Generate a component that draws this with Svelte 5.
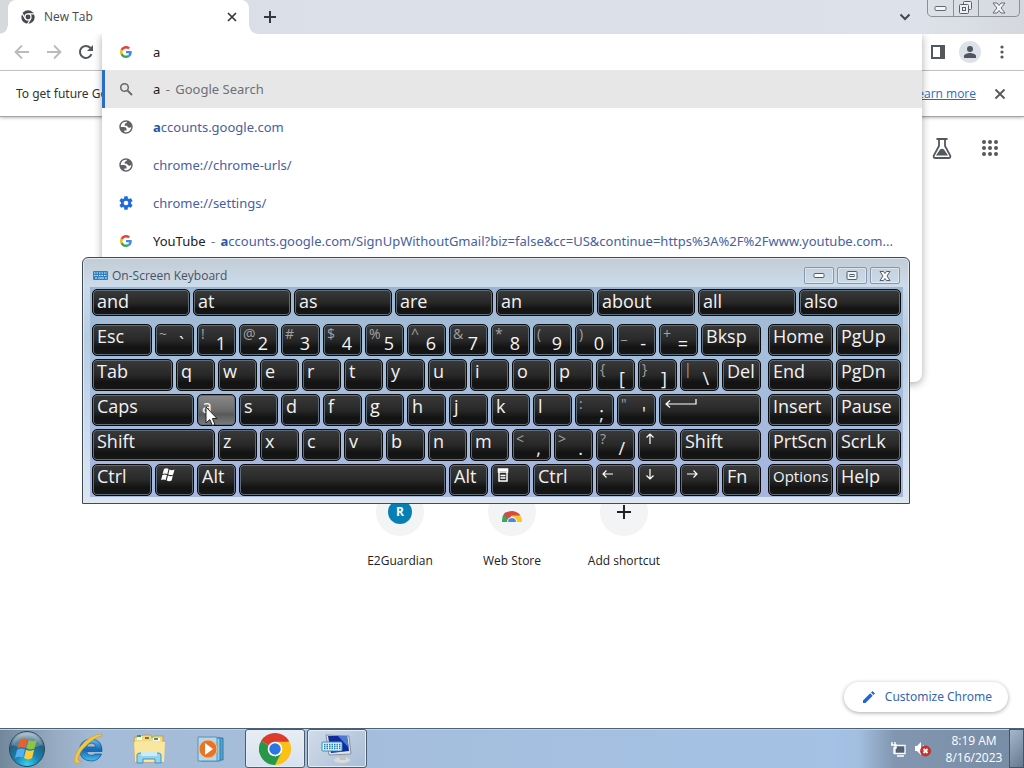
<script>
  const words = ['and', 'at', 'as', 'are', 'an', 'about', 'all', 'also'];
  const letters = (s) => s.split('').map((c) => ({ t: c, w: 39 }));
  const pair = (s, t) => ({ t, s, w: 39 });
  const columns = (row) => row.map((key) => `minmax(0, ${key.w}fr)`).join(' ');

  const rows = [
    [
      { t: 'Esc', w: 60 }, pair('~', '`'), pair('!', '1'), pair('@', '2'), pair('#', '3'), pair('$', '4'),
      pair('%', '5'), pair('^', '6'), pair('&', '7'), pair('*', '8'), pair('(', '9'), pair(')', '0'),
      pair('_', '-'), pair('+', '='), { t: 'Bksp', w: 60 }
    ],
    [{ t: 'Tab', w: 81 }, ...letters('qwertyuiop'), pair('{', '['), pair('}', ']'), pair('|', '\\'), { t: 'Del', w: 39 }],
    [{ t: 'Caps', w: 102 }, ...letters('asdfghjkl'), pair(':', ';'), pair('"', "'"), { icon: 'enter', name: 'Enter', w: 102 }],
    [
      { t: 'Shift', w: 123 }, ...letters('zxcvbnm'), pair('<', ','), pair('>', '.'), pair('?', '/'),
      { icon: 'up', name: 'Up', w: 39 }, { t: 'Shift', w: 81 }
    ],
    [
      { t: 'Ctrl', w: 60 }, { icon: 'win', name: 'Windows', w: 39 }, { t: 'Alt', w: 39 }, { t: '', name: 'Space', w: 207 },
      { t: 'Alt', w: 39 }, { icon: 'menu', name: 'Menu', w: 39 }, { t: 'Ctrl', w: 60 }, { icon: 'left', name: 'Left', w: 39 },
      { icon: 'down', name: 'Down', w: 39 }, { icon: 'right', name: 'Right', w: 39 }, { t: 'Fn', w: 39 }
    ]
  ];
  const side = [['Home', 'PgUp'], ['End', 'PgDn'], ['Insert', 'Pause'], ['PrtScn', 'ScrLk'], ['Options', 'Help']];
  let query = $state('a');
</script>

{#snippet google()}
  <svg width="12" height="12" viewBox="0 0 48 48" aria-hidden="true">
    <path fill="#ea4335" d="M24 9.5c3.54 0 6.71 1.22 9.21 3.6l6.85-6.85C35.9 2.38 30.47 0 24 0 14.62 0 6.51 5.38 2.56 13.22l7.98 6.19C12.43 13.72 17.74 9.5 24 9.5z" />
    <path fill="#4285f4" d="M46.98 24.55c0-1.57-.15-3.09-.38-4.55H24v9.02h12.94c-.58 2.96-2.26 5.48-4.78 7.18l7.73 6c4.51-4.18 7.09-10.36 7.09-17.65z" />
    <path fill="#fbbc05" d="M10.53 28.59c-.48-1.45-.76-2.99-.76-4.59s.27-3.14.76-4.59l-7.98-6.19C.92 16.46 0 20.12 0 24s.92 7.54 2.56 10.78l7.97-6.19z" />
    <path fill="#34a853" d="M24 48c6.48 0 11.93-2.13 15.89-5.81l-7.73-6c-2.15 1.45-4.92 2.3-8.16 2.3-6.26 0-11.57-4.22-13.47-9.91l-7.98 6.19C6.51 42.62 14.62 48 24 48z" />
  </svg>
{/snippet}

{#snippet globe()}
  <svg width="16" height="16" viewBox="0 0 24 24" aria-hidden="true">
    <path fill="#5f6368" fill-rule="evenodd" d="M12 2C6.48 2 2 6.48 2 12s4.48 10 10 10 10-4.48 10-10S17.52 2 12 2zM4 12h4.4c3.407.022 4.922 1.73 4.543 5.127H9.488v2.47a8.004 8.004 0 0 0 10.498-8.083C19.327 12.504 18.332 13 17 13c-2.137 0-3.206-.916-3.206-2.75h-3.748c-.274-2.728.683-4.092 2.87-4.092 0-.975.327-1.597.811-1.97A8.004 8.004 0 0 0 4 12z" />
  </svg>
{/snippet}

{#snippet chromeLogo(size)}
  <svg width={size} height={size} viewBox="0 0 48 48" aria-hidden="true">
    <path fill="#dd3b2e" d="M24 24 3.2 12A24 24 0 0 1 44.8 12z" />
    <path fill="#fbc116" d="M24 24 44.8 12A24 24 0 0 1 24 48z" />
    <path fill="#279847" d="M24 24 24 48A24 24 0 0 1 3.2 12z" />
    <path fill="#dd3b2e" d="M3.2 12 24 13H45.3L40 6H8z" />
    <path fill="#fbc116" d="M24 13H45.3L47 25 24 48 34.4 29z" />
    <path fill="#279847" d="M3.2 12 14 30 24 36 33.5 29.5 24 48 5 37z" />
    <circle cx="24" cy="24" r="11" fill="#fff" />
    <circle cx="24" cy="24" r="8.6" fill="#2a76e4" />
  </svg>
{/snippet}

<div class="desktop">
  <div class="browser">
    <header class="tabs">
      <div class="tab">
        <svg width="14" height="14" viewBox="0 0 48 48" aria-hidden="true">
          <circle cx="24" cy="24" r="23" fill="#45484c" />
          <path d="M24 13H47M14.5 29.5 3 10M33.5 29.5 22 49" stroke="#fff" stroke-width="4" />
          <circle cx="24" cy="24" r="10.5" fill="#45484c" stroke="#fff" stroke-width="4" />
        </svg>
        <span>New Tab</span>
        <button aria-label="Close tab">
          <svg width="10" height="10" viewBox="0 0 10 10"><path d="m1 1 8 8M9 1 1 9" stroke="#35383c" stroke-width="1.7" /></svg>
        </button>
      </div>
      <button class="plus" aria-label="New tab">
        <svg width="12" height="12" viewBox="0 0 12 12"><path d="M6 0v12M0 6h12" stroke="#35383c" stroke-width="2" /></svg>
      </button>
      <button class="search-tabs" aria-label="Search tabs">
        <svg width="12" height="8" viewBox="0 0 12 8"><path d="m1.5 1.5 4.5 4.5 4.5-4.5" fill="none" stroke="#45484c" stroke-width="2" /></svg>
      </button>
      <div class="caption">
        <button aria-label="Minimize"><svg width="13" height="7" viewBox="0 0 13 7"><rect x="1" y="1.5" width="11" height="4" rx="1" fill="#f5f6f8" stroke="#666a70" /></svg></button>
        <button aria-label="Restore">
          <svg width="14" height="14" viewBox="0 0 14 14" fill="#eceef1" stroke="#5d6167"><rect x="4.5" y=".5" width="8" height="8" rx="1" /><rect x=".5" y="3.5" width="9" height="9" rx="1" /><rect x="3.5" y="6.5" width="3" height="3" /></svg>
        </button>
        <button class="wide" aria-label="Close">
          <svg width="14" height="12" viewBox="0 0 14 12"><path d="M1 1h4l2 2.500L9 1h4L9 6l4 5H9L7 8.500 5 11H1l4-5z" fill="#f5f6f8" stroke="#666a70" /></svg>
        </button>
      </div>
    </header>

    <div class="toolbar">
      <button aria-label="Back"><svg width="16" height="16" viewBox="0 0 16 16"><path d="M15 8H2M8 1.500 1.500 8 8 14.500" fill="none" stroke="#b9bbbe" stroke-width="1.8" /></svg></button>
      <button aria-label="Forward"><svg width="16" height="16" viewBox="0 0 16 16"><path d="M1 8h13M8 1.500 14.500 8 8 14.500" fill="none" stroke="#b9bbbe" stroke-width="1.8" /></svg></button>
      <button aria-label="Reload"><svg width="16" height="16" viewBox="0 0 16 16"><path d="M13.500 10.200A6 6 0 1 1 12.300 3.800L14 5.500" fill="none" stroke="#54575b" stroke-width="2" /><path d="M15 1v6H9z" fill="#54575b" /></svg></button>
      <span class="grow"></span>
      <button aria-label="Side panel"><svg width="14" height="14" viewBox="0 0 14 14"><path d="M1 1h12v12H1z" fill="#fff" stroke="#54575b" stroke-width="2" /><path d="M9 1h4v12H9z" fill="#54575b" /></svg></button>
      <button class="avatar" aria-label="Profile"><svg width="12" height="12" viewBox="0 0 12 12" fill="#50555f"><circle cx="6" cy="3" r="3" /><path d="M0 12V10C0 8 4 7 6 7s6 1 6 3v2z" /></svg></button>
      <button aria-label="Menu"><svg width="4" height="14" viewBox="0 0 4 14" fill="#54575b"><circle cx="2" cy="2" r="1.6" /><circle cx="2" cy="7" r="1.6" /><circle cx="2" cy="12" r="1.6" /></svg></button>
    </div>

    <div class="infobar">
      <p>To get future Google Chrome updates, you'll need Windows 10 or later.</p>
      <a href="#more">Learn more</a>
      <button aria-label="Dismiss"><svg width="12" height="12" viewBox="0 0 12 12"><path d="m1.500 1.500 9 9M10.500 1.500l-9 9" stroke="#54575b" stroke-width="1.8" /></svg></button>
    </div>

    <main>
      <div class="page-tools">
        <button aria-label="Labs">
          <svg width="20" height="22" viewBox="0 0 20 22"><path d="M4.500 2h11M7 2v7L1.800 18.500Q1 21 3.500 21h13Q19 21 18.200 18.500L13 9V2" fill="none" stroke="#54575b" stroke-width="1.8" /><path d="M4 18.500 8 12.500q2-1.500 4 0l4 6z" fill="#54575b" /></svg>
        </button>
        <button aria-label="Google apps">
          <svg width="16" height="16" viewBox="0 0 16 16" fill="#54575b">
            {#each [2, 8, 14] as y}{#each [2, 8, 14] as x}<circle cx={x} cy={y} r="2" />{/each}{/each}
          </svg>
        </button>
      </div>
      <nav class="shortcuts">
        <a href="#guardian"><span class="disc"><b class="letter">R</b></span>E2Guardian</a>
        <a href="#store">
          <span class="disc store">
            <svg width="20" height="12" viewBox="0 0 20 12"><path d="M0 12Q0 4 4 2l6 6v4z" fill="#3ca45b" /><path d="M20 12q0-6-3-7h-7v7z" fill="#f9c62d" /><path d="M2 4.500A10 9 0 0 1 18.500 5.500H10L6 9z" fill="#d9493e" /><path d="M5 12a5 5 0 0 1 10 0z" fill="#fff" /><path d="M6 12a4 4 0 0 1 8 0z" fill="#4b86ec" /></svg>
          </span>Web Store
        </a>
        <a href="#add">
          <span class="disc"><svg width="14" height="14" viewBox="0 0 14 14"><path d="M7 0v14M0 7h14" stroke="#202124" stroke-width="2" /></svg></span>Add shortcut
        </a>
      </nav>
      <button class="customize">
        <svg width="14" height="14" viewBox="0 0 14 14" fill="#1f66d6"><path d="M1 13v-2.500L8.200 3.300l2.500 2.500L3.500 13zM9 2.500 10.500 1 13 3.500 11.500 5z" /></svg>
        Customize Chrome
      </button>
    </main>

    <section class="omnibox">
      <label class="row entry">{@render google()}<input aria-label="Address and search bar" bind:value={query} /></label>
      <a class="row active" href="#search">
        <svg width="14" height="14" viewBox="0 0 14 14"><circle cx="5.5" cy="5.5" r="3.8" fill="none" stroke="#65686c" stroke-width="1.5" /><path d="m8.500 8.500 4.500 4.500" stroke="#65686c" stroke-width="1.8" /></svg>
        <span>a <i class="dash">-</i> <i>Google Search</i></span>
      </a>
      <a class="row" href="#accounts">{@render globe()}<span class="url"><b>a</b>ccounts.google.com</span></a>
      <a class="row" href="#urls">{@render globe()}<span class="url">chrome://chrome-urls/</span></a>
      <a class="row" href="#settings">
        <svg width="16" height="16" viewBox="0 0 24 24"><path fill="#1f6bdd" d="M19.430 12.980c.04-.32.070-.64.070-.98s-.03-.66-.07-.98l2.110-1.650c.19-.15.24-.42.12-.64l-2-3.460c-.12-.22-.39-.3-.61-.22l-2.490 1c-.52-.4-1.080-.73-1.690-.98l-.38-2.650A.49.49 0 0 0 14 2h-4c-.25 0-.46.18-.49.42l-.38 2.650c-.61.25-1.170.59-1.690.98l-2.490-1c-.23-.09-.49 0-.61.22l-2 3.460c-.13.22-.07.49.12.64l2.110 1.650c-.04.32-.07.65-.07.98s.03.66.070.98l-2.110 1.650c-.19.15-.24.42-.12.64l2 3.460c.12.22.39.3.61.22l2.490-1c.52.4 1.080.73 1.690.98l.38 2.650c.03.24.24.42.49.42h4c.25 0 .46-.18.49-.42l.38-2.650c.61-.25 1.170-.59 1.690-.98l2.490 1c.23.09.49 0 .61-.22l2-3.460c.12-.22.070-.49-.12-.64zM12 15.500a3.500 3.500 0 1 1 0-7 3.500 3.500 0 0 1 0 7z" /></svg>
        <span class="url">chrome://settings/</span>
      </a>
      <a class="row" href="#youtube">{@render google()}<span>YouTube <i class="dash">-</i> <span class="url"><b>a</b>ccounts.google.com/SignUpWithoutGmail?biz=false&amp;cc=US&amp;continue=https%3A%2F%2Fwww.youtube.com...</span></span></a>
    </section>
  </div>

  <section class="osk" aria-label="On-Screen Keyboard">
    <header>
      <svg width="15" height="9" viewBox="0 0 15 9"><rect width="15" height="9" rx="1" fill="#2f7fc0" /><path d="M1 2h13M1 4.500h13" stroke="#d7ebf8" stroke-width="1.2" stroke-dasharray="1.5 1" /><path d="M2 7h2M5 7h6M12 7h2" stroke="#d7ebf8" stroke-width="1.2" /></svg>
      <h1>On-Screen Keyboard</h1>
      <button aria-label="Minimize keyboard"><svg width="12" height="7" viewBox="0 0 12 7"><rect x="1" y="1.5" width="10" height="4" rx="1" fill="#fff" stroke="#4f5c6b" /></svg></button>
      <button aria-label="Maximize keyboard"><svg width="12" height="10" viewBox="0 0 12 10" fill="#eef3f8" stroke="#4f5c6b"><rect x="1" y=".5" width="10" height="8" rx="1" /><rect x="4" y="3.5" width="4" height="2" /></svg></button>
      <button aria-label="Close keyboard"><svg width="12" height="10" viewBox="0 0 12 10"><path d="M1 .5h3.500L6 2.500 7.500.5H11L8 5l3 4.500H7.500L6 7.500 4.500 9.500H1L4 5z" fill="#fff" stroke="#4f5c6b" /></svg></button>
    </header>
    <div class="board">
      <div class="words">
        {#each words as word}<button class="key">{word}</button>{/each}
      </div>
      <div class="blocks">
        <div class="block main-block">
          {#each rows as row}
            <div class="keys" style="grid-template-columns:{columns(row)}">
              {#each row as key}
                <button class="key" class:pair={key.s} class:hover={key.t === 'a'} aria-label={key.name}>
                  {#if key.s}
                    <small>{key.s}</small><span>{key.t}</span>
                  {:else if key.icon === 'enter'}
                    <svg width="32" height="12" viewBox="0 0 32 12"><path d="M31 1v5H1M5 2.500 1 6l4 3.500" fill="none" stroke="#fff" stroke-width="1.2" /></svg>
                  {:else if key.icon === 'win'}
                    <svg width="15" height="14" viewBox="0 0 15 14" fill="#fff"><path d="M3 1q2.500-1.400 4.500 0L6.300 6Q4 4.800 1.600 6zM8.500 1.500q2.500 1.300 5 0L12.200 6.500q-2.500 1.200-4.900 0zM1.400 7q2.300-1.200 4.600 0L4.700 12q-2.200-1.200-4.600 0zM7 7.600q2.500 1.200 4.900 0L10.600 12.600q-2.500 1.200-4.900 0z" /></svg>
                  {:else if key.icon === 'menu'}
                    <svg width="12" height="14" viewBox="0 0 12 14"><path d="M1.500 1h9v3h-9zM2 4v9h8V4M3.500 7.500h5M3.500 10h5" fill="none" stroke="#fff" stroke-width="1.5" /><path d="M1 1h10v2H1z" fill="#fff" /></svg>
                  {:else if key.icon}
                    <svg class={key.icon} width="12" height="12" viewBox="0 0 12 12"><path d="M11 6H1M4.500 2.500 1 6l3.500 3.500" fill="none" stroke="#fff" stroke-width="1.2" /></svg>
                  {:else}{key.t}{/if}
                  {#if key.t === 'a'}
                    <svg class="cursor" width="13" height="21" viewBox="0 0 13 21"><path d="M1 1v16l3.800-3.500 2.600 6 2.600-1-2.600-6H12z" fill="#fff" stroke="#222" /></svg>
                  {/if}
                </button>
              {/each}
            </div>
          {/each}
        </div>
        <div class="block side-block">
          {#each side as row}
            <div class="keys">{#each row as t}<button class="key" class:tight={t === 'Options'}>{t}</button>{/each}</div>
          {/each}
        </div>
      </div>
    </div>
  </section>

  <footer class="taskbar">
    <button class="start" aria-label="Start">
      <svg width="38" height="38" viewBox="0 0 38 38">
        <defs>
          <radialGradient id="orb" cx=".5" cy=".95" r=".9"><stop offset="0" stop-color="#35d3f3" /><stop offset=".4" stop-color="#1683b1" /><stop offset=".75" stop-color="#275e7f" /><stop offset="1" stop-color="#9fb7c4" /></radialGradient>
        </defs>
        <circle cx="19" cy="19" r="17.5" fill="url(#orb)" stroke="#22495f" />
        <path d="M4 15a15.500 15.500 0 0 1 30 0Q19 21 4 15z" fill="#fff" opacity=".22" />
        <path d="M12 10q4-2.500 7.500-.5L17.500 18q-3.500-2-8 .5z" fill="#e9602c" />
        <path d="M20.800 10q4 2 8-.3L26.500 18.500q-4 2.300-8-.3z" fill="#90c33f" />
        <path d="M9 20q4-2.500 8-.5L15 27.500q-4-2-8 .6z" fill="#55aef0" />
        <path d="M18 19.700q4 2 8.200 0L24 28.300q-4 2.300-8-.2z" fill="#fdcc3a" />
      </svg>
    </button>
    <button aria-label="Internet Explorer">
      <svg width="32" height="32" viewBox="0 0 32 32">
        <defs><linearGradient id="ie" x2="0" y2="1"><stop stop-color="#65bff0" /><stop offset=".5" stop-color="#1267b5" /><stop offset="1" stop-color="#3fc0f1" /></linearGradient></defs>
        <path d="M29 18.500H13.500q.5 4 4.500 4 2.500 0 4-1.500h6.500Q26 28 18 28 7 27.500 6.500 17 7 6.500 18 6q11.500.5 11 12.500zM13.500 14H23q-.7-4-4.700-4t-4.800 4z" fill="url(#ie)" stroke="#144d84" stroke-width=".7" />
        <path d="M29 1Q17 1 7 14-1 25 2.500 30.500 5 31 9 28 5 29 5 26q1-7 9-14Q22 4 29 3z" fill="#f3c742" stroke="#bd9433" stroke-width=".5" />
      </svg>
    </button>
    <button aria-label="Explorer">
      <svg width="34" height="30" viewBox="0 0 34 30">
        <path d="M1 3h7l2-2h8l1 3 2-2h9v26H2z" fill="#efd981" stroke="#b8984a" stroke-width=".8" />
        <path d="M4 2h5v4H4zM20 4h7v3h-7z" fill="#fff" /><path d="M4 2h4M12 4h4M21 5h4" stroke="#3f9b4e" stroke-width="2" /><path d="M12 4h3" stroke="#d9472d" stroke-width="2" />
        <path d="M1 8q14-2 31 0l-1 20H2z" fill="#f9e79f" />
        <path d="M4 29V21q0-2 3-2h18q3 0 3 2v8h-6v-4H10v4z" fill="#94d2ee" stroke="#4693bd" /><path d="M8 18h16v4H8z" fill="#c9ecf8" />
      </svg>
    </button>
    <button aria-label="Media Player">
      <svg width="28" height="26" viewBox="0 0 28 26"><path d="M6 2h20v22H6z" fill="#4fa4d4" stroke="#327ba9" /><path d="M4 2h19v23H4z" fill="#8fcdea" stroke="#327ba9" /><path d="M1 1h19v24H1z" fill="#b5d8ec" stroke="#5794b6" /><circle cx="11" cy="13" r="9" fill="#e87526" stroke="#f8b88b" /><path d="m8 7 8 6-8 6z" fill="#fff" /></svg>
    </button>
    <button class="open current" aria-label="Google Chrome">{@render chromeLogo(32)}</button>
    <button class="open" aria-label="On-Screen Keyboard">
      <svg width="32" height="32" viewBox="0 0 32 32">
        <ellipse cx="21" cy="27" rx="8" ry="3" fill="#d9dcda" /><path d="m17 21 6-1 2 7h-6z" fill="#bfc4c5" />
        <path d="M5 2 28 3l2 18-22 1z" fill="#dfe5ec" stroke="#88909c" /><path d="M7 3h19l2 15-18 2z" fill="#102b9c" /><path d="M17 3h9l2 12z" fill="#4b79d4" />
        <rect x="1" y="9" width="20" height="9" rx="1" fill="#e9f5fb" stroke="#318abe" /><path d="M3 11.500h17M3 13.500h17M3 15.500h17" stroke="#267eb9" stroke-width="1.3" stroke-dasharray="1.5 1" />
      </svg>
    </button>
    <span class="grow"></span>
    <div class="tray">
      <svg width="16" height="16" viewBox="0 0 16 16"><path d="M5 4.500h10v8H5z" fill="#526174" stroke="#fff" stroke-width="1.3" /><path d="M2 1v3M5 1v3M1 4h5v3H4v6M7 15h7" fill="none" stroke="#fff" stroke-width="1.4" /></svg>
      <svg width="17" height="16" viewBox="0 0 17 16"><path d="M1 5h2l4-4v13l-4-4H1z" fill="#fff" /><path d="M9 4q1 1.500 1 3" stroke="#fff" fill="none" /><circle cx="11.5" cy="10" r="5" fill="#d3302d" stroke="#ad2220" stroke-width=".7" /><path d="m9.500 8 4 4M13.500 8l-4 4" stroke="#fff" stroke-width="1.8" /></svg>
      <time>8:19 AM<br />8/16/2023</time>
    </div>
    <button class="peek" aria-label="Show desktop"></button>
  </footer>
</div>

<style>
  :global(body) { margin: 0; }
  .desktop {
    position: relative; display: flex; flex-direction: column; min-height: 100vh; overflow: hidden;
    background: #fff; color: #303236; font: 12px/16px 'Open Sans', 'Noto Sans', sans-serif;
  }
  .desktop *, .desktop { box-sizing: border-box; }
  svg { display: block; flex: none; }
  button { display: flex; align-items: center; justify-content: center; margin: 0; padding: 0; border: 0; background: none; color: inherit; font: inherit; }
  a { color: inherit; text-decoration: none; }
  .grow { flex: 1; }
  .browser { flex: 1; display: flex; flex-direction: column; }

  .tabs { display: flex; height: 34px; padding-left: 8px; background: linear-gradient(90deg, #d5d9dc, #dbe0e9 30%, #dde1e9 90%, #d5d9de); }
  .tab { position: relative; display: flex; align-items: center; gap: 9px; width: 241px; padding: 0 10px 0 13px; border-radius: 8px 8px 0 0; background: #fff; color: #45484c; }
  .tab::before, .tab::after { content: ''; position: absolute; bottom: 0; width: 8px; height: 8px; }
  .tab::before { right: 100%; background: radial-gradient(circle at 0 0, #0000 7px, #fff 8px); }
  .tab::after { left: 100%; background: radial-gradient(circle at 100% 0, #0000 7px, #fff 8px); }
  .tab span { flex: 1; }
  .tab button { width: 14px; height: 16px; }
  .plus { width: 42px; }
  .search-tabs { width: 44px; margin-left: auto; }
  .caption { display: flex; height: 17px; margin: 0 4px 0 0; border: 1px solid #8b9097; border-top: 0; border-radius: 0 0 5px 5px; }
  .caption button { width: 25px; }
  .caption button + button { border-left: 1px solid #8b9097; }
  .caption .wide { width: 41px; }

  .toolbar { display: flex; align-items: center; gap: 12px; height: 37px; padding: 0 12px; border-bottom: 1px solid #c9cbcd; }
  .toolbar button { width: 20px; height: 20px; }
  .toolbar .avatar { border-radius: 50%; background: #dde1ea; box-shadow: 0 0 0 1px #dde1ea; }

  .infobar { display: flex; align-items: center; height: 46px; padding: 0 18px 0 16px; border-bottom: 1px solid #a3a5a8; box-shadow: 0 1px 3px #0004; }
  .infobar p { flex: 1; margin: 0; font-family: 'Noto Sans', sans-serif; }
  .infobar a { color: #2c6bbd; text-decoration: underline; }
  .infobar button { margin-left: 18px; }

  main { flex: 1; display: flex; flex-direction: column; }
  .page-tools { display: flex; justify-content: flex-end; align-items: center; gap: 30px; padding: 20px 26px 0 0; }
  .shortcuts { display: flex; justify-content: center; margin-top: 329px; color: #202124; }
  .shortcuts a { display: flex; flex-direction: column; align-items: center; gap: 17px; width: 112px; }
  .disc { display: flex; align-items: center; justify-content: center; width: 48px; height: 48px; border-radius: 50%; background: #f3f4f5; }
  .letter { width: 24px; border-radius: 50%; background: #087fb4; color: #fff; line-height: 24px; text-align: center; }
  .store { padding-top: 8px; }
  .customize { gap: 9px; align-self: flex-end; height: 30px; margin: auto 16px 16px 0; padding: 0 16px 0 18px; border-radius: 15px; background: #fff; box-shadow: 0 1px 4px #0005; color: #3565b4; font-family: 'Noto Sans', sans-serif; }

  .omnibox { position: absolute; top: 34px; left: 102px; right: 102px; height: 348px; border-radius: 0 0 8px 8px; background: #fff; color: #202124; font: 13px/18px 'Noto Sans', sans-serif; box-shadow: 0 2px 8px #0005; clip-path: inset(0 -12px -12px -12px); }
  .row { display: grid; grid-template-columns: 16px 1fr; align-items: center; justify-items: center; gap: 19px; height: 38px; padding: 0 10px 0 16px; }
  .row > span { justify-self: stretch; white-space: nowrap; }
  .row i { color: #6d7074; font-style: normal; }
  .row .dash { margin: 0 2px; }
  .row.entry { height: 36px; }
  .row.active { padding-left: 13px; border-left: 3px solid #2a6dc8; background: #e7e7e8; }
  .url { color: #46619f; }
  .url b { color: #2758a8; }
  input { width: 100%; padding: 0; border: 0; outline: 0; background: none; color: inherit; font: inherit; }

  .osk { position: absolute; top: 257px; left: 82px; right: 114px; padding: 0 6px 6px 7px; border: 1px solid #404b57; border-radius: 6px 6px 0 0; background: linear-gradient(#c2ccd5, #ccdbeb 28px, #b8cce2 80px, #ccdcef 170px, #dce6ee); box-shadow: inset 0 0 0 1px #e0e9f0; }
  .osk header { display: flex; align-items: center; gap: 3px; height: 29px; padding: 6px 3px 0 3px; color: #48525f; }
  .osk h1 { flex: 1; margin: 0 0 0 1px; font-size: 12px; line-height: 16px; font-weight: 400; }
  .osk header button { width: 30px; height: 17px; border: 1px solid #8696ab; border-radius: 2px; box-shadow: inset 0 0 0 1px #fff6; }
  .board { display: flex; flex-direction: column; gap: 8px; padding: 2px 2px 1px; background: linear-gradient(#9db5ce, #a5bfdc 60px, #a7b5df); }
  .words, .keys { display: grid; gap: 3px; }
  .words { grid-template-columns: repeat(7, minmax(0, 98fr)) minmax(0, 102fr); }
  .blocks { display: flex; gap: 7px; }
  .block { display: flex; flex-direction: column; gap: 3px; min-width: 0; }
  .main-block { flex: 669 1 0; }
  .side-block { flex: 133 1 0; }
  .side-block .keys { grid-template-columns: repeat(2, minmax(0, 1fr)); }
  .key {
    position: relative; height: 32px; justify-content: flex-start; align-items: flex-start; padding: 0 0 0 4px;
    border: 1px solid #080c10; border-radius: 5px; background: linear-gradient(#3a3a3a, #282828 50%, #131313 75%, #161616);
    box-shadow: inset 0 0 0 1px #5f6e76; color: #f2f2f2; font-size: 18px; line-height: 22px; text-align: left; white-space: nowrap;
  }
  .words .key { height: 27px; }
  .key > svg { margin: 3px 0 0 1px; }
  .key.hover { background: linear-gradient(#8a8a8a, #6c6c6c 50%, #5a5a5a 65%, #7c7c7c); }
  .key.tight { font-size: 15px; }
  .pair { justify-content: space-between; padding: 0 9px 0 3px; }
  .pair small { color: #a2a2a2; font-size: 14px; line-height: 18px; }
  .pair span { line-height: 36px; }
  .up { transform: rotate(90deg); }
  .right { transform: rotate(180deg); }
  .down { transform: rotate(-90deg); }
  .key .cursor { position: absolute; top: 11px; left: 7px; margin: 0; }

  .taskbar { display: flex; align-items: stretch; height: 40px; border-top: 1px solid #4c6178; background: linear-gradient(90deg, #73879b, #97acc3 55px, #a5bcd8 100px, #a5bcda 260px, #a4c2e5 calc(100% - 190px), #a2bedf calc(100% - 165px), #8296b0 calc(100% - 130px), #778ca5); box-shadow: inset 0 1px #c3d3e4; }
  .taskbar > button { width: 60px; margin-right: 1px; }
  .taskbar > .start { width: 54px; margin-right: 5px; }
  .taskbar > .open { border: 1px solid #4c5b6d; border-radius: 3px; background: linear-gradient(135deg, #d2dce9, #a8bdd6); box-shadow: inset 0 0 0 1px #e3edf7; margin-right: 2px; }
  .taskbar > .current { margin-left: 3px; background: linear-gradient(#e8edf3, #d7e2ef); }
  .tray { display: flex; align-items: center; gap: 8px; color: #fff; }
  time { width: 70px; text-align: center; line-height: 17px; }
  .taskbar > .peek { width: 15px; margin: 0; border: 1px solid #42556b; background: linear-gradient(135deg, #a6b7ca, #66798f); }
</style>
